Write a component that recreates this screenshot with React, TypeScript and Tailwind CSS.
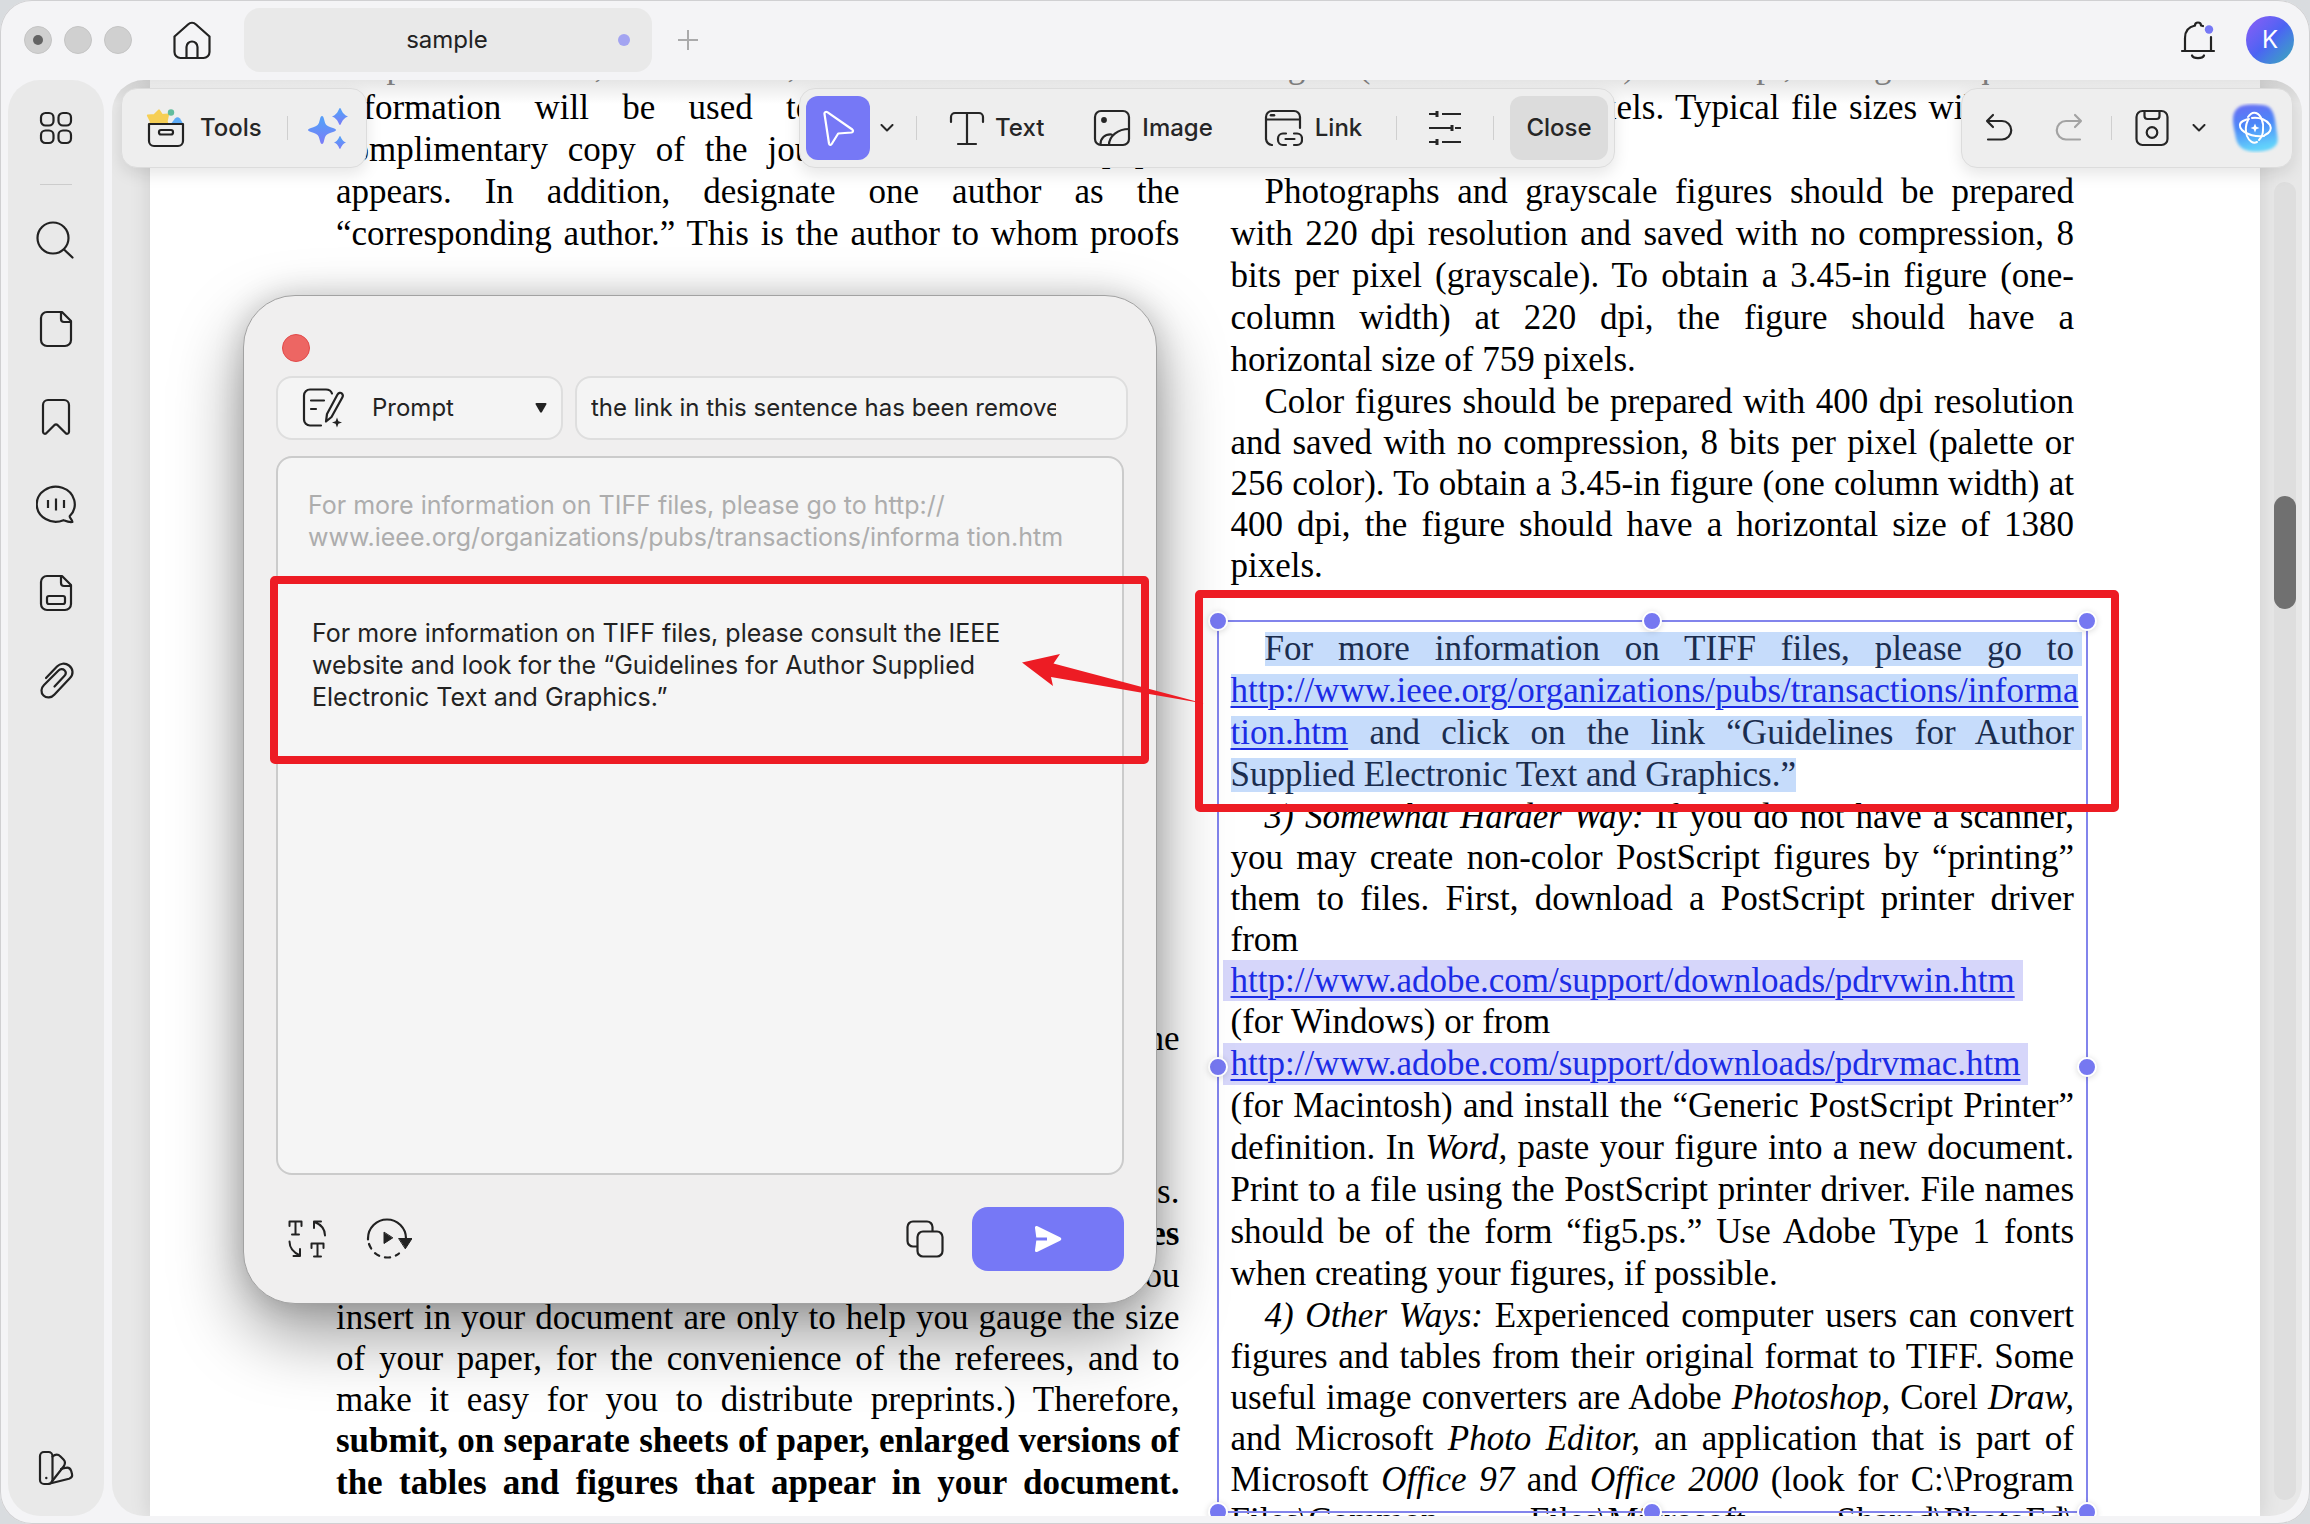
import React, { useState } from 'react';

type IconProps = { children: React.ReactNode; size?: number; className?: string };

function Icon({ children, size = 40, className = '' }: IconProps) {
  return (
    <svg
      width={size}
      height={size}
      viewBox={`0 0 ${size} ${size}`}
      fill="none"
      stroke="currentColor"
      strokeWidth="2.2"
      strokeLinecap="round"
      strokeLinejoin="round"
      className={`shrink-0 ${className}`}
      aria-hidden="true"
    >
      {children}
    </svg>
  );
}

const sideItems = [
  {
    label: 'Search',
    icon: (
      <>
        <circle cx="17" cy="17" r="15.5" />
        <path d="M28 28.5 36.5 36.5" />
      </>
    ),
  },
  {
    label: 'Pages',
    icon: (
      <>
        <path d="M26 3H11a6 6 0 0 0-6 6v22a6 6 0 0 0 6 6h18a6 6 0 0 0 6-6V12Z" />
        <path d="M25 3v7a3 3 0 0 0 3 3h7" />
      </>
    ),
  },
  {
    label: 'Bookmarks',
    icon: <path d="M7 35V8a5 5 0 0 1 5-5h16a5 5 0 0 1 5 5v27a2 2 0 0 1-3 1.500L21.500 28a2.500 2.500 0 0 0-3 0L10 36.500A2 2 0 0 1 7 35Z" />,
  },
  {
    label: 'Comments',
    icon: (
      <>
        <path d="M27.500 35.200a19 17.500 0 1 1 6.300-4.200c-.8 1.600 2.200 3.200 2.600 6-3.800.6-6.400-.8-8.900-1.800Z" />
        <path d="M12 15v8M20 13.500v12M28 15v8" strokeLinecap="butt" />
      </>
    ),
  },
  {
    label: 'Fields',
    icon: (
      <>
        <path d="M26 3H11a6 6 0 0 0-6 6v22a6 6 0 0 0 6 6h18a6 6 0 0 0 6-6V12Z" />
        <path d="M25 3v7a3 3 0 0 0 3 3h7" />
        <rect x="11" y="23" width="18" height="8" rx="2" />
      </>
    ),
  },
  {
    label: 'Attachments',
    icon: <path d="M10 17 21 5.500C24 2.500 29 1.500 33 4.500c4.500 3.500 4.500 9 1 12.500L18.500 33.500c-3 3.500-8 4-11 1s-2.500-7.500.5-10.500L22.500 9.500c1.600-1.700 4.400-1.900 6-.3s1.500 4-.2 5.800L18.500 25.500" />,
  },
];

function SideButton({ label, children }: { label: string; children: React.ReactNode }) {
  return (
    <button aria-label={label} className="flex h-[88px] w-full items-center justify-center">
      {children}
    </button>
  );
}

function Divider() {
  return <span className="h-6 w-px bg-[#cfcfcf]" />;
}

function Chevron() {
  return (
    <svg width="14" height="8" viewBox="0 0 14 8" fill="none" stroke="currentColor" strokeWidth="2" aria-hidden="true">
      <path d="M1.500 1 7 6.500 12.500 1" strokeLinecap="round" strokeLinejoin="round" />
    </svg>
  );
}

function TitleBar() {
  return (
    <header className="flex h-20 shrink-0 items-center pr-4 pl-6">
      <div className="flex gap-3">
        <span className="flex size-7 items-center justify-center rounded-full border border-[#c4c4c4] bg-[#d0d0d0]">
          <span className="size-2.5 rounded-full bg-[#636363]" />
        </span>
        <span className="size-7 rounded-full border border-[#c4c4c4] bg-[#d0d0d0]" />
        <span className="size-7 rounded-full border border-[#c4c4c4] bg-[#d0d0d0]" />
      </div>
      <button aria-label="Home" className="ml-10">
        <Icon>
          <path d="M2.500 16.500 16 4.500a6 6 0 0 1 8 0l13.500 12V32a6 6 0 0 1-6 6h-23a6 6 0 0 1-6-6Z" />
          <path d="M14.500 38V27a5.500 5.500 0 0 1 11 0v11" />
        </Icon>
      </button>
      <button className="ml-8 flex h-16 w-[408px] items-center justify-end rounded-2xl bg-[#e9e9e9] pr-[22px]">
        <span className="flex-1 pl-8 text-center">sample</span>
        <span className="size-3 rounded-full bg-[#a3a4f1]" />
      </button>
      <button aria-label="New tab" className="ml-[26px] text-[#aaaaab]">
        <Icon size={20}>
          <path d="M10 0v20M0 10h20" strokeLinecap="butt" strokeWidth="2" />
        </Icon>
      </button>
      <div className="ml-auto flex items-center gap-7">
        <button aria-label="Notifications">
          <Icon>
            <path d="M7 30V18C7 10 12 6.500 17 5.500M33 17v13M4 31h32" strokeLinejoin="miter" />
            <path d="M17 5.500a3 3 0 0 1 6 0c1 .2 1.500.4 2 .6M14 35.500c1.500 3.500 10.500 3.500 12 0" />
            <circle cx="31" cy="9.500" r="4.200" fill="#7678f5" stroke="none" />
          </Icon>
        </button>
        <button className="size-12 rounded-full bg-gradient-to-br from-[#8b5cf6] via-[#4b63f3] to-[#3fa9b5] text-white">K</button>
      </div>
    </header>
  );
}

function SideBar() {
  return (
    <nav className="flex w-24 shrink-0 flex-col items-center rounded-[32px] bg-[#e9e9e9] pt-1">
      <SideButton label="Thumbnails">
        <Icon>
          <rect x="5" y="5" width="12.500" height="12.500" rx="4.500" />
          <rect x="22.500" y="5" width="12.500" height="12.500" rx="4.500" />
          <rect x="5" y="22.500" width="12.500" height="12.500" rx="4.500" />
          <rect x="22.500" y="22.500" width="12.500" height="12.500" rx="4.500" />
        </Icon>
      </SideButton>
      <span className="mt-3 mb-3 h-px w-8 bg-[#cccccc]" />
      {sideItems.map((item) => (
        <SideButton key={item.label} label={item.label}>
          <Icon>{item.icon}</Icon>
        </SideButton>
      ))}
      <div className="mt-auto w-full pb-1">
        <SideButton label="Theme">
          <Icon>
            <rect x="4" y="4" width="12.500" height="32" rx="4" />
            <path d="M16.500 8.500c3-2.500 6-2 8 0l3 3c2 2 1.600 4.500.5 6.500L15.500 34" />
            <path d="M25 21l5-1.200c2.800-.6 4.400.8 5.200 3.200l.8 3c.6 2.500-.8 4-3 4.700L12 36" />
            <circle cx="10.300" cy="30" r="1.200" fill="currentColor" stroke="none" />
          </Icon>
        </SideButton>
      </div>
    </nav>
  );
}

const barClass =
  'flex h-20 items-center rounded-2xl border border-[#dcdcdc] bg-[#eeeeee] shadow-[0_6px_16px_rgba(0,0,0,0.10)]';

function Toolbars() {
  return (
    <div className="absolute inset-x-[9px] top-2 grid grid-cols-[1fr_auto_1fr] text-[#262626]">
      <div className={`${barClass} w-[246px] justify-self-start pr-[18px] pl-6`}>
        <button className="flex items-center gap-3.5 font-medium">
          <Icon>
            <path d="M13 2.500l3 4.500 6-.5-1.500 7 1.500 4H4l1-4-3-6 6.500-.5Z" fill="#f6cf55" stroke="#f6cf55" />
            <circle cx="25" cy="4.500" r="3.200" fill="#62bd9e" stroke="none" />
            <path d="M24 17l5-6.500q2.500-2.500 5 0L38 17Z" fill="#5cabf6" stroke="none" />
            <path d="M3 16h34v17a5 5 0 0 1-5 5H8a5 5 0 0 1-5-5Z" fill="#eeeeee" stroke="#222" />
            <rect x="13" y="22" width="14" height="4.500" rx="2" stroke="#222" />
          </Icon>
          Tools
        </button>
        <span className="ml-auto" />
        <Divider />
        <button aria-label="AI assistant" className="ml-5">
          <svg width="40" height="42" viewBox="0 0 40 42" aria-hidden="true">
            <defs>
              <linearGradient id="spark" x1="0" y1="0" x2="0" y2="1">
                <stop offset="0.2" stopColor="#589df8" />
                <stop offset="1" stopColor="#7b7bf7" />
              </linearGradient>
            </defs>
            <g fill="url(#spark)">
              <path d="M14 9c1 0 1.500 1 2 3 1.500 6 2 7 9 9 2 .6 3 1.200 3 2s-1 1.400-3 2c-7 2-7.500 3-9 9-.5 2-1 3-2 3s-1.500-1-2-3c-1.500-6-2-7-9-9-2-.6-3-1.200-3-2s1-1.400 3-2c7-2 7.500-3 9-9 .5-2 1-3 2-3Z" />
              <path d="M32 1c1.500 0 1.200 6 8 8.500-6.800 2.500-6.500 8.500-8 8.500s-1.200-6-8-8.500C30.800 7 30.500 1 32 1Z" />
              <path d="M32 29c1 0 1 4.500 6 6.500-5 2-5 6.500-6 6.500s-1-4.500-6-6.500c5-2 5-6.500 6-6.500Z" />
            </g>
          </svg>
        </button>
      </div>

      <div className={`${barClass} w-[816px] px-1.5 font-medium`}>
        <button aria-label="Select" className="flex size-16 items-center justify-center rounded-xl bg-[#7678f6] text-white">
          <Icon size={36}>
            <path d="M4.500 4 9 33.500c.3 1.500 2 1.800 2.700.5l6.500-10.500 13.300-1c1.600-.2 2-2 .8-3L7.300 2.200C6 1.200 4.200 2.400 4.500 4Z" />
          </Icon>
        </button>
        <button aria-label="Select options" className="mr-[22px] ml-2.5">
          <Chevron />
        </button>
        <Divider />
        <button className="ml-[30px] flex items-center gap-2">
          <Icon>
            <path d="M4 14V9a4 4 0 0 1 4-4h24a4 4 0 0 1 4 4v5M20 5v31M11 36h18" />
          </Icon>
          Text
        </button>
        <button className="ml-12 flex items-center gap-2.5">
          <Icon>
            <rect x="3" y="3" width="34" height="34" rx="6" />
            <circle cx="12" cy="12" r="1.800" fill="currentColor" />
            <path d="M37 21c-11 0-20 7-20 16M8.500 36.500c0-6 4-10.500 11-10" />
          </Icon>
          Image
        </button>
        <button className="ml-[50px] flex items-center gap-3">
          <Icon>
            <path d="M9 37a7 7 0 0 1-6-6V9a6 6 0 0 1 6-6h22a6 6 0 0 1 6 6v11M3 11.500h34" />
            <path d="M8 7.200h3" strokeWidth="2.600" />
            <path d="M23 25.500h-3a5 5 0 0 0-5 5v1.500a5 5 0 0 0 5 5h3M31 25.500h3a5 5 0 0 1 5 5v1.500a5 5 0 0 1-5 5h-3M22.500 31h9" />
          </Icon>
          Link
        </button>
        <span className="ml-auto" />
        <Divider />
        <button aria-label="Properties" className="mx-7">
          <Icon>
            <path d="M4 6h9M17 6h19M4 20h22M30 20h6M4 34h9M17 34h19" strokeLinecap="butt" />
            <path d="M12 3v6M27 17v6M12 31v6" strokeLinecap="butt" strokeWidth="3" />
          </Icon>
        </button>
        <Divider />
        <button className="ml-4 h-16 w-[98px] rounded-xl bg-[#dcdcdc]">Close</button>
      </div>

      <div className={`${barClass} w-[332px] justify-self-end pr-3 pl-5`}>
        <button aria-label="Undo">
          <Icon size={34}>
            <path d="M11 4 5 10l6 6M5 10h15a9 9 0 0 1 0 18.500H6" />
          </Icon>
        </button>
        <button aria-label="Redo" className="ml-9 text-[#a3a3a3]">
          <Icon size={34}>
            <path d="M23 4l6 6-6 6M29 10H14a9 9 0 0 0 0 18.500h14" />
          </Icon>
        </button>
        <span className="ml-auto" />
        <Divider />
        <button aria-label="Save" className="ml-5">
          <Icon>
            <rect x="4.500" y="3" width="31" height="34" rx="6" />
            <path d="M12.500 3v5a3 3 0 0 0 3 3h9a3 3 0 0 0 3-3V3" />
            <circle cx="20" cy="24.500" r="5.300" />
          </Icon>
        </button>
        <button aria-label="Save options" className="ml-5">
          <Chevron />
        </button>
        <button aria-label="AI" className="ml-6">
          <svg width="50" height="50" viewBox="0 0 50 50" aria-hidden="true">
            <defs>
              <linearGradient id="ai" x1="0" y1="0" x2="0.200" y2="1">
                <stop offset="0" stopColor="#6a6cf3" />
                <stop offset="0.500" stopColor="#4b87f8" />
                <stop offset="1" stopColor="#62d2fb" />
              </linearGradient>
              <filter id="soft">
                <feGaussianBlur stdDeviation="1.500" />
              </filter>
            </defs>
            <path
              d="M11 3C20 1 33 1 39 4c5 4 6 12 7 20 1 9 4 16-2 20-7 5-18 5-25 4C8 46 6 38 5 30 3 20 0 8 11 3Z"
              fill="url(#ai)"
              filter="url(#soft)"
            />
            <g fill="none" stroke="#fff" strokeWidth="2" strokeLinecap="round">
              <path d="M34 33c-8 1-17-1-22-6-3-3-3-7 1-9 2-1 4-2 6-2M22 15c8-1 15 2 18 7 2 4 0 8-5 10" />
              <path d="M18 14c2-3 5-5 8-4 5 2 8 9 7 17 0 4-2 8-4 10M27 39c-4 2-8-1-10-6-2-6-1-12 1-16" />
            </g>
            <path d="M25 20.500l1.300 3.200 3.200 1.300-3.200 1.300L25 29.500l-1.300-3.200-3.200-1.300 3.200-1.300Z" fill="#fff" />
          </svg>
        </button>
      </div>
    </div>
  );
}

// One printed line of the PDF. Lines are justified unless they end a paragraph.
function Line({ children, end = false, indent = false }: { children: React.ReactNode; end?: boolean; indent?: boolean }) {
  return (
    <span
      className={`block whitespace-nowrap ${end ? 'text-left' : 'text-justify [text-align-last:justify]'} ${indent ? 'pl-[34px]' : ''}`}
    >
      {children}
    </span>
  );
}

function LeftColumn() {
  return (
    <div className="min-w-0">
      <p className="text-[#8a8a8a]">
        <Line>telephone number, fax number, and e-mail address. This</Line>
      </p>
      <p>
        <Line>information will be used to send each author a</Line>
        <Line>complimentary copy of the journal in which the paper</Line>
        <Line>appears. In addition, designate one author as the</Line>
        <Line>“corresponding author.” This is the author to whom proofs</Line>
      </p>
      <p className="mt-[763px] text-right">the</p>
      <p className="mt-[111px]">
        <span className="block text-right">tables and figures.</span>
        <span className="block text-right font-bold">Figures and tables</span>
        <span className="block text-right">(The figures and tables you</span>
      </p>
      <p className="leading-[41px]">
        <Line>insert in your document are only to help you gauge the size</Line>
        <Line>of your paper, for the convenience of the referees, and to</Line>
        <Line>make it easy for you to distribute preprints.) Therefore,</Line>
        <b className="leading-[42px]">
          <Line>submit, on separate sheets of paper, enlarged versions of</Line>
          <Line>the tables and figures that appear in your document.</Line>
        </b>
      </p>
    </div>
  );
}

const handleClass = 'absolute size-5 rounded-full border-2 border-white bg-[#7678f1] shadow-[0_1px_6px_rgba(0,0,0,0.15)]';

function SelectionFrame() {
  return (
    <div className="pointer-events-none absolute -inset-x-3.5 -top-2 h-[893px] border-2 border-[#8284ec]">
      <span className={`${handleClass} -top-[11px] -left-[11px]`} />
      <span className={`${handleClass} -top-[11px] left-1/2 -translate-x-1/2`} />
      <span className={`${handleClass} -top-[11px] -right-[11px]`} />
      <span className={`${handleClass} top-1/2 -left-[11px] -translate-y-1/2`} />
      <span className={`${handleClass} top-1/2 -right-[11px] -translate-y-1/2`} />
      <span className={`${handleClass} -bottom-[11px] -left-[11px]`} />
      <span className={`${handleClass} -bottom-[11px] left-1/2 -translate-x-1/2`} />
      <span className={`${handleClass} -right-[11px] -bottom-[11px]`} />
    </div>
  );
}

const linkClass = 'text-[#1c2ce6] underline decoration-2 underline-offset-4';

function RightColumn() {
  return (
    <div className="min-w-0">
      <p className="text-[#8a8a8a]">
        <Line>in figure (one column width) at 600 dpi, the figure requires a</Line>
      </p>
      <p>
        <Line>horizontal size of 2070 pixels. Typical file sizes will be on</Line>
        <Line end>the order of 0.5 MB.</Line>
      </p>
      <p>
        <Line indent>Photographs and grayscale figures should be prepared</Line>
        <Line>with 220 dpi resolution and saved with no compression, 8</Line>
        <Line>bits per pixel (grayscale). To obtain a 3.45-in figure (one-</Line>
        <Line>column width) at 220 dpi, the figure should have a</Line>
        <Line end>horizontal size of 759 pixels.</Line>
      </p>
      <p className="leading-[41px]">
        <Line indent>Color figures should be prepared with 400 dpi resolution</Line>
        <Line>and saved with no compression, 8 bits per pixel (palette or</Line>
        <Line>256 color). To obtain a 3.45-in figure (one column width) at</Line>
        <Line>400 dpi, the figure should have a horizontal size of 1380</Line>
        <Line end>pixels.</Line>
      </p>
      <div className="relative mt-[42px]">
        <p className="-mr-2 text-[#1b2d4e]">
          <span className="ml-[34px] block">
            <span className="inline-block w-full bg-[#c6dcfb] pr-2 leading-[34px]">
              <Line>For more information on TIFF files, please go to</Line>
            </span>
          </span>
          <span className="block">
            <a href="#ieee" className={`${linkClass} inline-block bg-[#c6dcfb] leading-[34px]`}>
              http://www.ieee.org/organizations/pubs/transactions/informa
            </a>
          </span>
          <span className="block">
            <span className="inline-block w-full bg-[#c6dcfb] pr-2 leading-[34px]">
              <Line>
                <a href="#ieee" className={linkClass}>tion.htm</a> and click on the link “Guidelines for Author
              </Line>
            </span>
          </span>
          <span className="block">
            <span className="inline-block bg-[#c6dcfb] leading-[34px]">Supplied Electronic Text and Graphics.”</span>
          </span>
        </p>
        <p className="leading-[41px]">
          <Line indent>
            <i>3) Somewhat Harder Way:</i> If you do not have a scanner,
          </Line>
          <Line>you may create non-color PostScript figures by “printing”</Line>
          <Line>them to files. First, download a PostScript printer driver</Line>
          <Line end>from</Line>
          <a href="#win" className={`${linkClass} -ml-2 inline-block bg-[#d6d6fa] px-2`}>
            http://www.adobe.com/support/downloads/pdrvwin.htm
          </a>
        </p>
        <p>
          <Line end>(for Windows) or from</Line>
          <a href="#mac" className={`${linkClass} -ml-2 inline-block bg-[#d6d6fa] px-2`}>
            http://www.adobe.com/support/downloads/pdrvmac.htm
          </a>
          <Line>(for Macintosh) and install the “Generic PostScript Printer”</Line>
          <Line>
            definition. In <i>Word,</i> paste your figure into a new document.
          </Line>
          <Line>Print to a file using the PostScript printer driver. File names</Line>
          <Line>should be of the form “fig5.ps.” Use Adobe Type 1 fonts</Line>
          <Line end>when creating your figures, if possible.</Line>
        </p>
        <p className="leading-[41px]">
          <Line indent>
            <i>4) Other Ways:</i> Experienced computer users can convert
          </Line>
          <Line>figures and tables from their original format to TIFF. Some</Line>
          <Line>
            useful image converters are Adobe <i>Photoshop,</i> Corel <i>Draw,</i>
          </Line>
          <Line>
            and Microsoft <i>Photo Editor,</i> an application that is part of
          </Line>
          <Line>
            Microsoft <i>Office 97</i> and <i>Office 2000</i> (look for C:\Program
          </Line>
          <Line>Files\Common Files\Microsoft Shared\PhotoEd\</Line>
        </p>
        <SelectionFrame />
      </div>
    </div>
  );
}

function DocumentView() {
  return (
    <main className="relative flex min-w-0 flex-1 overflow-hidden rounded-[32px] bg-[#e8e8e8] pl-[38px]">
      <article className="grid flex-1 grid-cols-2 gap-x-[51px] bg-white px-[186px] font-['Liberation_Serif',serif] text-[35px] leading-[42px] text-black shadow-[0_0_20px_rgba(0,0,0,0.12)]">
        <div className="-mt-[35px] min-w-0">
          <LeftColumn />
        </div>
        <div className="-mt-[35px] min-w-0">
          <RightColumn />
        </div>
      </article>
      <div className="z-0 w-[42px] shrink-0 pt-[102px] pr-1.5 pb-4 pl-3.5">
        <div className="h-full rounded-full bg-[#dedede] pt-[314px]">
          <div className="h-[113px] rounded-full bg-[#707070]" />
        </div>
      </div>
      <div className="absolute inset-x-0 top-0 h-6 bg-gradient-to-b from-black/10 to-transparent" />
      <Toolbars />
    </main>
  );
}

function PromptDialog() {
  const [mode, setMode] = useState('prompt');
  const [prompt, setPrompt] = useState('the link in this sentence has been removed, rewrite it');
  const [result, setResult] = useState(
    'For more information on TIFF files, please consult the IEEE\nwebsite and look for the “Guidelines for Author Supplied\nElectronic Text and Graphics.”'
  );

  return (
    <section
      aria-label="AI prompt"
      className="absolute top-[295px] left-[243px] flex h-[1009px] w-[914px] flex-col rounded-[52px] border border-[#a2a2a2] bg-[#f0efef] px-8 pt-[38px] pb-8 shadow-[0_30px_70px_rgba(0,0,0,0.40),0_0_30px_rgba(0,0,0,0.16)]"
    >
      <button aria-label="Close dialog" className="ml-1.5 size-7 rounded-full border border-[#e24a4a] bg-[#ed6663]" />
      <div className="mt-3.5 -mr-1 flex gap-3">
        <div className="flex h-16 w-[287px] items-center rounded-2xl border-2 border-[#dedede] bg-[#f4f4f4] pr-3.5 pl-6">
          <Icon size={42}>
            <path d="M30 6.500C29 3.500 27 2.500 24 2.500H8a6 6 0 0 0-6 6v24a6 6 0 0 0 6 6h11M9 13.500h13M9 22h5" />
            <path d="M25 27 35.500 7.500c1-1.800 3-2.200 4.200-1.200s1.500 2.500.6 4.200L29.500 30l-5.500 4.500Z" />
            <path d="M35 30.500l1.400 3.700 3.600 1.300-3.600 1.300-1.400 3.700-1.400-3.700-3.600-1.300 3.600-1.300Z" fill="currentColor" stroke="none" />
          </Icon>
          <select
            aria-label="Mode"
            value={mode}
            onChange={(e) => setMode(e.target.value)}
            className="ml-7 min-w-0 flex-1 appearance-none bg-transparent outline-none"
          >
            <option value="prompt">Prompt</option>
            <option value="rewrite">Rewrite</option>
          </select>
          <svg width="12" height="10" viewBox="0 0 12 10" className="shrink-0" aria-hidden="true">
            <path d="M1.500 0h9q1.500 0 .8 1.500L7 9q-1 1.500-2 0L.7 1.500Q0 0 1.500 0Z" fill="#222" />
          </svg>
        </div>
        <div className="flex h-16 flex-1 items-center rounded-2xl border-2 border-[#dedede] bg-[#f4f4f4] pr-[70px] pl-3.5">
          <input
            aria-label="Instruction"
            value={prompt}
            onChange={(e) => setPrompt(e.target.value)}
            className="w-full min-w-0 bg-transparent outline-none"
          />
        </div>
      </div>
      <div className="mt-4 flex min-h-0 flex-1 flex-col rounded-2xl border-2 border-[#cbcbcb] bg-[#f5f5f5] px-[30px] pt-[31px] text-[25px] leading-8">
        <p className="text-[#adadad]">
          For more information on TIFF files, please go to http://
          <br />
          www.ieee.org/organizations/pubs/transactions/informa tion.htm
        </p>
        <textarea
          aria-label="Result"
          value={result}
          onChange={(e) => setResult(e.target.value)}
          className="mt-16 ml-1 min-h-0 flex-1 resize-none overflow-hidden bg-transparent whitespace-pre outline-none"
        />
      </div>
      <div className="mt-8 flex items-center pl-3">
        <button aria-label="Compare texts">
          <Icon size={38}>
            <path d="M1.500 6V1.500h12V6M7.500 1.500v13M4 14.500h7M23.500 28v-4.500h12V28M29.500 23.500v13M26 36.500h7" strokeWidth="2" />
            <path d="M26 8V1.500h7M26.500 2C33 4.500 37 9 37 15.500M1.500 21.500c0 6 4 11 10.500 14M12 29v7H5.500" strokeWidth="2" />
          </Icon>
        </button>
        <button aria-label="Continue" className="ml-10">
          <Icon size={46}>
            <path d="M2 23.500v-1a19 19 0 0 1 38 0" />
            <path d="M3 28c3 8 9 13.500 18 13.500 5 0 9-1.500 12-4" strokeDasharray="5 6" />
            <path d="M18 16.500v11l8.500-5.500ZM33 22.500h13l-6.500 10Z" fill="currentColor" stroke="currentColor" strokeWidth="1" />
          </Icon>
        </button>
        <button aria-label="Copy" className="mr-7 ml-auto">
          <Icon size={38}>
            <path d="M11 26.500H7a5.500 5.500 0 0 1-5.500-5.500V7A5.500 5.500 0 0 1 7 1.500h14A5.500 5.500 0 0 1 26.500 7v4" />
            <rect x="11.500" y="11.500" width="25" height="25" rx="5.500" />
          </Icon>
        </button>
        <button aria-label="Send" className="flex h-16 w-[152px] items-center justify-center rounded-2xl bg-[#7678f6]">
          <svg width="28" height="28" viewBox="0 0 28 28" fill="#fff" aria-hidden="true">
            <path d="M1 3C.8 1.200 2 .5 3.500 1.200L26 12.200c1.800.9 1.800 2.700 0 3.600L3.500 26.800C2 27.500.8 26.800 1 25l1.300-9.500H13v-3H2.300Z" />
          </svg>
        </button>
      </div>
    </section>
  );
}

// Red callouts drawn over the app: source sentence, result and the arrow between them.
function Annotations() {
  return (
    <div className="pointer-events-none">
      <div className="absolute top-[576px] left-[270px] h-[188px] w-[879px] rounded-[5px] border-8 border-[#ed1c24]" />
      <div className="absolute top-[590px] left-[1195px] h-[222px] w-[924px] rounded-[5px] border-8 border-[#ed1c24]" />
      <svg width="184" height="56" viewBox="0 0 184 56" className="absolute top-[652px] left-[1022px]" aria-hidden="true">
        <path d="M0 10.500 38 2 31.500 11.500 182 51.500 29 25 31 34Z" fill="#ed1c24" />
      </svg>
    </div>
  );
}

export default function App() {
  return (
    <div className="h-screen overflow-hidden bg-[#d9dcdf] font-['Inter',sans-serif] text-[24px] text-[#222222]">
      <div className="relative flex h-full flex-col overflow-hidden rounded-[32px] bg-[#f4f4f6] inset-ring inset-ring-[#d0d0d2]">
        <TitleBar />
        <div className="flex min-h-0 flex-1 gap-2 px-2 pb-2">
          <SideBar />
          <DocumentView />
        </div>
      </div>
      <PromptDialog />
      <Annotations />
    </div>
  );
}
